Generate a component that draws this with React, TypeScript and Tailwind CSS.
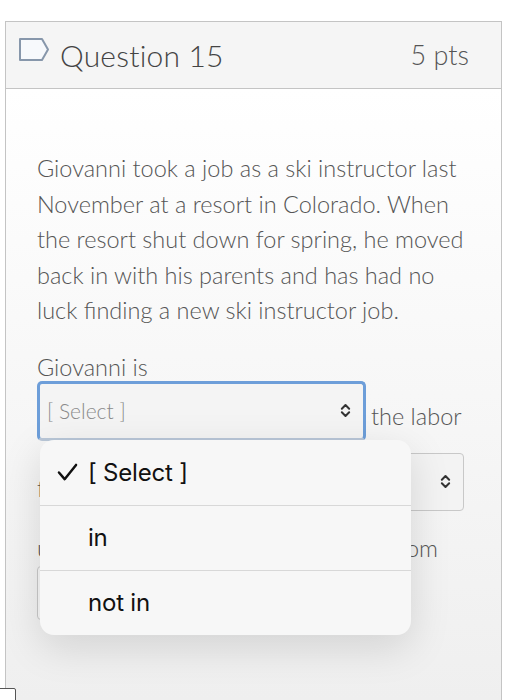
import React from 'react';

const lato = { fontFamily: 'Lato, "Open Sans", sans-serif' };
const sf = { fontFamily: 'Inter, "Noto Sans", sans-serif' };

function UpDown({ className = '' }: { className?: string }) {
  return (
    <svg viewBox="0 0 12 16" className={className} fill="none" stroke="#333" strokeWidth="2.2" strokeLinecap="round" strokeLinejoin="round">
      <polyline points="2,6 6,2 10,6" />
      <polyline points="2,10 6,14 10,10" />
    </svg>
  );
}

function TagIcon() {
  return (
    <svg viewBox="0 0 32 26" className="w-[32px] h-[26px]">
      <path d="M2 2 H24 L30 12.5 L24 23 H2 Z" fill="#f7f9fc" stroke="#8797ab" strokeWidth="2" strokeLinejoin="round" />
    </svg>
  );
}

function Option({ label, checked, first }: { label: string; checked?: boolean; first?: boolean }) {
  return (
    <div className={`h-[65px] flex items-center ${first ? '' : 'border-t border-[#d8d8d8]'}`}>
      <div className="w-[48px] flex justify-end pr-[10px]">
        {checked && (
          <svg viewBox="0 0 22 20" className="w-[21px] h-[19px]" fill="none" stroke="#111" strokeWidth="2.6" strokeLinecap="round" strokeLinejoin="round">
            <polyline points="2,10 8,17 20,2" />
          </svg>
        )}
      </div>
      <span className="text-[24px] text-[#111] tracking-[-0.2px]">{label}</span>
    </div>
  );
}

export default function App() {
  return (
    <div className="relative w-[512px] h-[700px] overflow-hidden bg-white font-light" style={lato}>
      <div className="pt-[21px] pl-[5px] pr-[10px]">
        <div className="border border-b-0 border-[#c4c4c4] h-[679px] flex flex-col">
          {/* header */}
          <div className="h-[67px] bg-[#f5f5f5] border-b border-[#c4c4c4] flex items-center pl-[12px] pr-[32px]">
            <div className="-mt-[10px]">
              <TagIcon />
            </div>
            <span className="ml-[10px] text-[30px] text-[#444] tracking-[0.2px]">Question 15</span>
            <span className="ml-auto text-[27px] text-[#555]">5 pts</span>
          </div>

          {/* body */}
          <div className="flex-1 bg-gradient-to-b from-white to-[#efefef] px-[31px] pt-[62px] text-[23.5px] text-[#555]">
            <p className="leading-[35.5px]">
              Giovanni took a job as a ski instructor last November at a resort in Colorado. When the resort shut down
              for spring, he moved back in with his parents and has had no luck finding a new ski instructor job.
            </p>

            <div className="mt-[24px] leading-[28px] h-[28px]">Giovanni is</div>

            <div className="flex items-start">
              <div className="w-[329px] h-[60px] rounded-[5px] border-[3px] border-[#6d9ed9] border-b-[#b9c7d8] bg-[#f4f4f4] flex items-center pl-[7px] pr-[12px]">
                <span className="text-[21px] text-[#8a8a8a]">[ Select ]</span>
                <UpDown className="ml-auto w-[11px] h-[15px]" />
              </div>
              <span className="ml-[5px] mt-[18px] leading-[35px]">the labor</span>
            </div>

            <div className="flex items-start mt-[12px]">
              <span className="mt-[18px] leading-[35px]">force.</span>
              <div className="ml-auto mr-[6px] w-[220px] h-[58px] rounded-[4px] border border-[#c8c8c8] bg-[#f3f3f3] flex items-center justify-end pr-[12px]">
                <UpDown className="w-[11px] h-[15px]" />
              </div>
            </div>

            <div className="mt-[20px] h-[35px] leading-[35px] flex">
              <span>u</span>
              <span className="ml-auto mr-[32px]">from</span>
            </div>

            <div className="w-[300px] h-[54px] rounded-[4px] border border-[#c8c8c8] bg-[#f7f7f7]" />
          </div>
        </div>
      </div>

      {/* dropdown menu */}
      <div
        className="absolute left-[40px] top-[440px] w-[371px] h-[195px] rounded-[14px] bg-[#f7f7f7] shadow-[0_12px_40px_rgba(0,0,0,0.13)] overflow-hidden font-normal"
        style={sf}
      >
        <Option label="[ Select ]" checked first />
        <Option label="in" />
        <Option label="not in" />
      </div>

      {/* corner box */}
      <div className="absolute left-[-2px] top-[688px] w-[18px] h-[16px] border-[1.5px] border-[#555] rounded-tr-[2px] bg-white" />
    </div>
  );
}
